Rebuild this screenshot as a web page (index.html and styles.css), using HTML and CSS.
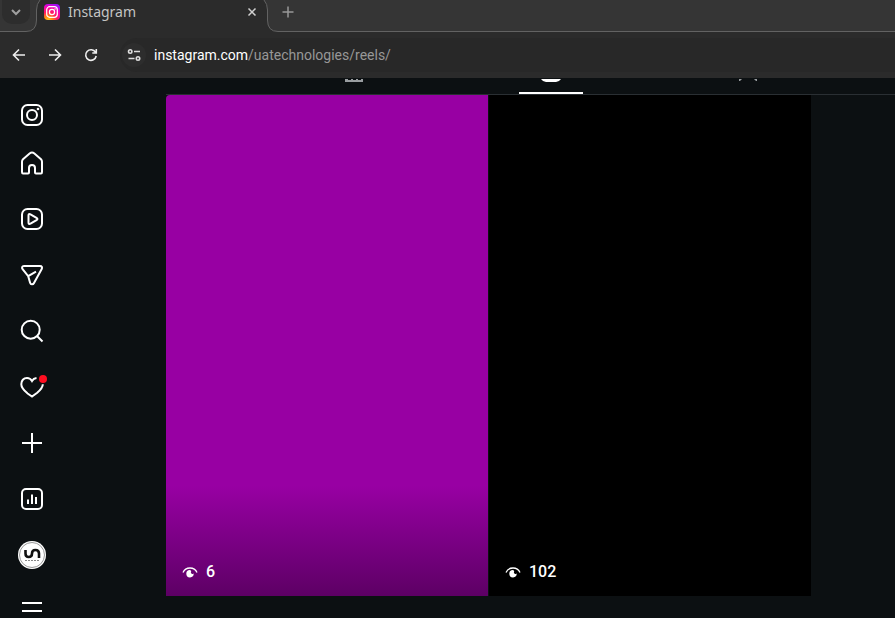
FILE: index.html
```html
<!DOCTYPE html>
<html lang="en">
<head>
<meta charset="utf-8">
<title>Instagram</title>
<link rel="stylesheet" href="styles.css">
</head>
<body>
<header class="browser">
  <div class="tabstrip">
    <div class="strip-start">
      <button class="tab-search" aria-label="Search tabs"><svg width="16" height="16" viewBox="0 0 16 16"><path d="M4 6l4 4 4-4"/></svg></button>
    </div>
    <svg class="tab-edge" width="16" height="32" viewBox="0 0 16 32"><path class="edge-fill" d="M0 0H14Q10.500 4 10.500 10V20Q10.500 31.500 0 31.500Z"/><path class="edge-line" d="M14 0Q10.500 4 10.500 10V20Q10.500 31.500 0 31.500"/></svg>
    <div class="tab">
      <svg class="favicon" width="16" height="16" viewBox="0 0 16 16">
        <defs><radialGradient id="ig" cx=".25" cy="1.050" r="1.100"><stop offset="0" stop-color="#ffd21a"/><stop offset=".25" stop-color="#ff8a10"/><stop offset=".5" stop-color="#ff1b60"/><stop offset=".8" stop-color="#f400b8"/><stop offset="1" stop-color="#a010f8"/></radialGradient></defs>
        <rect width="16" height="16" rx="4" fill="url(#ig)" stroke="none"/>
        <g fill="none" stroke="#fff" stroke-width="1.200"><rect x="2.700" y="2.700" width="10.600" height="10.600" rx="3"/><circle cx="8" cy="8" r="2.600"/></g><circle cx="11.100" cy="4.900" r=".7" fill="#fff" stroke="none"/>
      </svg>
      <span class="tab-title">Instagram</span>
      <button class="tab-close" aria-label="Close tab"><svg width="16" height="16" viewBox="0 0 16 16"><path d="M4.500 4.500l7 7M11.500 4.500l-7 7"/></svg></button>
    </div>
    <svg class="tab-edge" width="16" height="32" viewBox="0 0 16 32"><path class="edge-fill" d="M16 0H2Q5.500 4 5.500 10V20Q5.500 31.500 16 31.500Z"/><path class="edge-line" d="M2 0Q5.500 4 5.500 10V20Q5.500 31.500 16 31.500"/></svg>
    <div class="strip-end">
      <button class="new-tab" aria-label="New tab"><svg width="16" height="16" viewBox="0 0 16 16"><path d="M8 2.500v11M2.500 8h11"/></svg></button>
    </div>
  </div>
  <div class="toolbar">
    <button class="tool" aria-label="Back"><svg width="16" height="16" viewBox="0 0 16 16"><path d="M14 8H3M8 2.500L2.500 8 8 13.500"/></svg></button>
    <button class="tool" aria-label="Forward"><svg width="16" height="16" viewBox="0 0 16 16"><path d="M2 8h11M8 2.500L13.500 8 8 13.500"/></svg></button>
    <button class="tool" aria-label="Reload"><svg width="16" height="16" viewBox="0 0 16 16"><path d="M12.500 5.200A5.300 5.300 0 1 0 13.200 9M13.300 2v4H9.300"/></svg></button>
    <div class="address">
      <button class="site-info" aria-label="Site information"><svg width="16" height="16" viewBox="0 0 16 16"><circle cx="4.200" cy="4.500" r="1.700"/><path d="M8 4.500h6M2.500 11.500h6"/><circle cx="12" cy="11.500" r="1.700"/></svg></button>
      <a class="url" href="#"><span class="host">instagram.com</span>/uatechnologies/reels/</a>
    </div>
  </div>
</header>
<div class="page">
  <nav class="sidebar" aria-label="Main">
    <a class="side-link brand" href="#" aria-label="Instagram"><svg width="24" height="24" viewBox="0 0 24 24"><rect x="2" y="2" width="20" height="20" rx="5.500"/><circle cx="12" cy="12" r="5"/><circle class="solid" cx="18" cy="6" r="1.300"/></svg></a>
    <a class="side-link" href="#" aria-label="Home"><svg width="24" height="24" viewBox="0 0 24 24"><path d="M2 10.700V21q0 1.500 1 1.500h5q1 0 1-1v-4.500a3 3 0 0 1 6 0v4.500q0 1 1 1h5q1 0 1-1.500V10.700q0-1.500-1-2.500l-6.600-5.700q-2.400-1.900-4.800 0L3 8.200q-1 1-1 2.500Z"/></svg></a>
    <a class="side-link" href="#" aria-label="Reels"><svg width="24" height="24" viewBox="0 0 24 24"><rect x="2" y="2" width="20" height="20" rx="5.500"/><path d="M8.500 8.500v7q0 2.200 2 1.200l6-3.500q1.900-1.200 0-2.400l-6-3.500q-2-1-2 1.200Z"/></svg></a>
    <a class="side-link" href="#" aria-label="Messages"><svg width="24" height="24" viewBox="0 0 24 24"><path d="M4 3h16c2 0 2.500 1.500 1.700 3L14 20c-1 2-3.300 1.700-3.900-.3L8.200 13.200 2.600 6.200C1.500 4.600 2 3 4 3ZM8.200 13.200 16 8.700"/></svg></a>
    <a class="side-link" href="#" aria-label="Search"><svg width="24" height="24" viewBox="0 0 24 24"><circle cx="10.700" cy="10.700" r="9"/><path d="M17 17l5.500 5.500"/></svg></a>
    <a class="side-link" href="#" aria-label="Notifications"><svg width="28" height="24" viewBox="-2 0 28 24"><path d="M16.500 3Q13.500 3.400 12 6 10.300 3 7 3C3.500 3 1.300 5.600 1.300 9.200c0 4 2.900 6.400 6.300 9.300L12 21.500l5.200-3.700c3.500-3 5.600-5.200 5.600-8.500"/><circle class="dot" cx="23" cy="4" r="4"/></svg></a>
    <a class="side-link" href="#" aria-label="Create"><svg width="24" height="24" viewBox="0 0 24 24"><path d="M12 2v20M2 12h20"/></svg></a>
    <a class="side-link" href="#" aria-label="Dashboard"><svg width="24" height="24" viewBox="0 0 24 24"><rect x="2" y="2" width="20" height="20" rx="4"/><path d="M8 12.500V17M12 7.500V17M16 10V17"/></svg></a>
    <a class="side-link" href="#" aria-label="Profile"><svg width="28" height="28" viewBox="0 0 28 28"><circle class="solid" cx="14" cy="14" r="14"/><circle class="ring" cx="14" cy="14" r="12.500"/><path class="mark" d="M7.500 9v3.500q0 3.500 3.200 3.500 3.300 0 3.300-3.500t3.300-3.500q3.700 0 3.700 3.500v4.500"/><path class="caption" d="M7 19.500h15"/></svg></a>
    <a class="side-link menu" href="#" aria-label="More"><svg width="24" height="24" viewBox="0 0 24 24"><path d="M2 8h20M2 16h20"/></svg></a>
  </nav>
  <main class="profile">
    <div class="profile-tabs">
      <a class="profile-tab" href="#" aria-label="Posts"><svg width="20" height="4" viewBox="0 0 20 4"><path d="M1 0v3h18V0h-2v1h-3V0h-2v1H9V0H7v1H4V0Z"/></svg></a>
      <a class="profile-tab active" href="#" aria-label="Reels"><svg width="20" height="4" viewBox="0 0 20 4"><path d="M0 0h20q-2 3-5 3H5Q2 3 0 0Z"/></svg></a>
      <a class="profile-tab" href="#" aria-label="Tagged"><svg width="20" height="4" viewBox="0 0 20 4"><path d="M1 0h3L2 2H1ZM16 0h3v2h-1Z"/></svg></a>
    </div>
    <div class="reels">
      <a class="reel purple" href="#"><svg class="eye" width="16" height="18" viewBox="0 0 16 18"><path d="M1 9.500Q3 5 8 5t7 4.500"/><path class="iris" d="M8 7A3.700 3.700 0 1 0 11.700 10.600Q10.500 11.300 9.400 10.400 8.400 9.500 9.200 8.200 8.900 7.300 8 7Z"/></svg><span>6</span></a>
      <a class="reel" href="#"><svg class="eye" width="16" height="18" viewBox="0 0 16 18"><path d="M1 9.500Q3 5 8 5t7 4.500"/><path class="iris" d="M8 7A3.700 3.700 0 1 0 11.700 10.600Q10.500 11.300 9.400 10.400 8.400 9.500 9.200 8.200 8.900 7.300 8 7Z"/></svg><span>102</span></a>
    </div>
  </main>
</div>
</body>
</html>
```
FILE: styles.css
```css
* { box-sizing: border-box; }
body {
  margin: 0;
  height: 100vh;
  overflow: hidden;
  display: flex;
  flex-direction: column;
  background: #0c1012;
  color: #fff;
  font-family: "Noto Sans", sans-serif;
}
a { color: inherit; text-decoration: none; }
button {
  display: grid;
  place-items: center;
  padding: 0;
  border: 0;
  background: none;
  color: inherit;
}
svg { display: block; flex: none; fill: none; stroke: currentColor; stroke-width: 2; }

.browser { flex: none; background: #2b2b2b; }
.tabstrip { display: flex; height: 32px; }
.strip-start, .strip-end { background: #353535; border-bottom: 1px solid #626262; }
.strip-start { width: 26px; }
.strip-end { flex: 1; padding-left: 2px; }
.tab-edge { stroke-width: 1; }
.edge-fill { fill: #353535; stroke: none; }
.edge-line { stroke: #626262; }
.tab-search {
  position: relative;
  width: 28px;
  height: 24px;
  margin-left: 2px;
  border-radius: 0 0 10px 10px;
  background: #2d2d2d;
  color: #a0a0a0;
}
.tab {
  display: flex;
  align-items: center;
  width: 220px;
  height: 24px;
  padding-left: 2px;
  gap: 8px;
}
.tab-title { flex: 1; font-size: 14px; line-height: 24px; color: #c4c4c4; }
.tab-close { width: 16px; height: 24px; margin-right: 2px; color: #d0d0d0; }
.new-tab { width: 16px; height: 24px; color: #989898; }
.tab-close svg, .new-tab svg { stroke-width: 1.5; }

.toolbar {
  display: flex;
  align-items: center;
  height: 46px;
  padding-left: 1px;
}
.tool { width: 36px; height: 36px; color: #eee; }
.tool svg, .site-info svg { stroke-width: 1.6; }
.address {
  flex: 1;
  display: flex;
  align-items: center;
  gap: 8px;
  height: 34px;
  margin-left: 11px;
  padding-left: 2px;
  border-radius: 17px 0 0 17px;
  background: #282828;
}
.site-info { width: 24px; height: 24px; border-radius: 50%; color: #ddd; background: #2d2d2d; }
.url { font: 14px/20px Roboto, sans-serif; color: #979797; }
.host { color: #fff; }

.page { flex: 1; display: flex; min-height: 0; }
.sidebar { flex: none; width: 64px; padding-top: 17px; }
.side-link { display: grid; place-items: center; height: 56px; }
.side-link svg { overflow: visible; }
.brand { height: 40px; }
.menu { height: 48px; }
.solid { fill: #fff; stroke: none; }
.dot { fill: #ff0e20; stroke: none; }
.ring { stroke: #999; stroke-width: 1; }
.mark { stroke: #111; stroke-width: 2.6; }
.caption { stroke: #888; stroke-width: 1; stroke-dasharray: 2 1; }

.profile { flex: 1; min-width: 0; margin-left: 102px; }
.profile-tabs {
  display: flex;
  gap: 133px;
  height: 17px;
  padding-left: 156px;
  border-bottom: 1px solid #2a2f33;
}
.profile-tab {
  display: flex;
  justify-content: center;
  width: 64px;
  padding-top: 1px;
  color: #999da0;
}
.profile-tab svg { fill: currentColor; stroke: none; }
.profile-tab.active { color: #fff; border-bottom: 2px solid #fff; }
.reels {
  display: grid;
  grid-template-columns: 1fr 1fr;
  gap: 1px;
  margin-right: 84px;
}
.reel {
  display: flex;
  align-items: flex-end;
  gap: 8px;
  aspect-ratio: 9 / 14;
  padding: 15px 16px;
  background: #000;
  font: 500 16px/18px Roboto, sans-serif;
}
.purple {
  border-top-left-radius: 4px;
  background: linear-gradient(#9800a3 78%, #6d0076 94%, #5d0064);
}
.eye { stroke-width: 1.3; }
.iris { fill: #fff; stroke: none; }
```
